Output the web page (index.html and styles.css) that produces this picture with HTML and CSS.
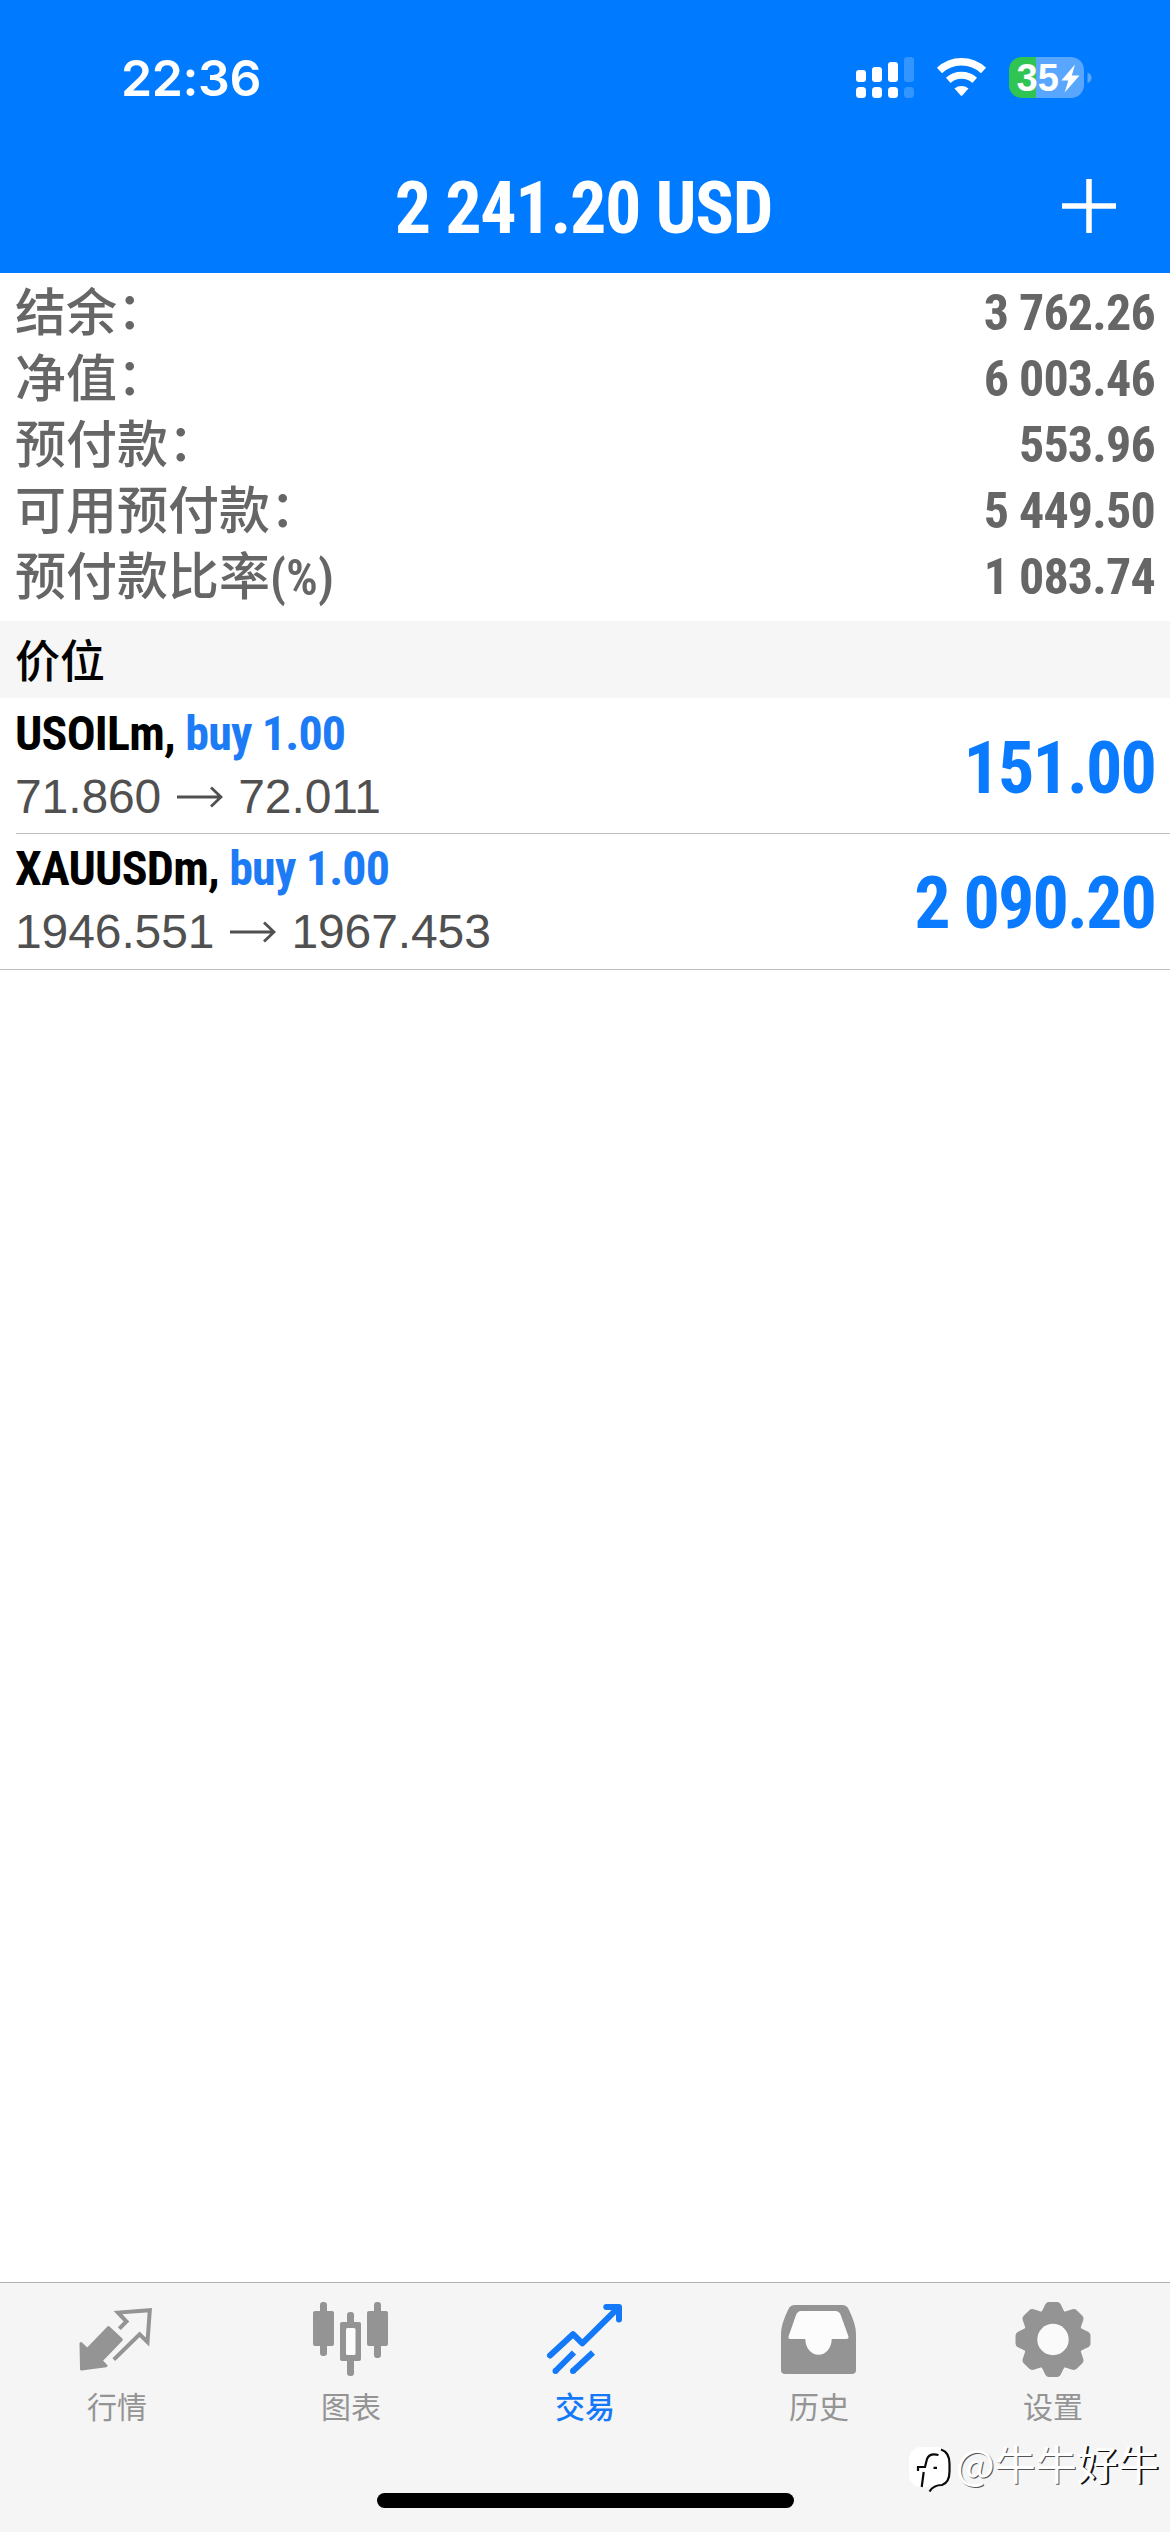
FILE: index.html
```
<!DOCTYPE html>
<html lang="zh-CN">
<head>
<meta charset="utf-8">
<title>交易</title>
<link rel="stylesheet" href="styles.css">
</head>
<body>
<div class="screen">
  <header class="header">
    <div class="status">
      <span class="clock">22:36</span>
      <svg class="status-icons" width="236" height="42" viewBox="856 57 236 42">
        <g fill="#fff">
          <rect x="856" y="70" width="10" height="12" rx="3"/>
          <rect x="872" y="67" width="10" height="15" rx="3"/>
          <rect x="888" y="62" width="10" height="20" rx="3"/>
          <rect x="856" y="87" width="10" height="11" rx="3.5"/>
          <rect x="872" y="87" width="10" height="11" rx="3.5"/>
          <rect x="888" y="87" width="10" height="11" rx="3.5"/>
        </g>
        <g fill="#3395ff">
          <rect x="904" y="57" width="10" height="25" rx="3"/>
          <rect x="904" y="87" width="10" height="11" rx="3.5"/>
        </g>
        <path d="M939.5 70.5a32 32 0 0 1 44 0" fill="none" stroke="#fff" stroke-width="7.5"/>
        <path d="M948.3 80.3a20 20 0 0 1 26.4 0" fill="none" stroke="#fff" stroke-width="7"/>
        <path d="M954.5 88.500a11.500 11.500 0 0 1 14 0L962.500 95.200q-1 1-2 0z" fill="#fff"/>
        <path d="M1036 57v41h-14a13 13 0 0 1-13-13v-15a13 13 0 0 1 13-13z" fill="#30c552"/>
        <path d="M1036 57h35a13 13 0 0 1 13 13v15a13 13 0 0 1-13 13h-35z" fill="#59a6ff"/>
        <path d="M1087.500 72.500q4 1.500 4 5.300t-4 5.300z" fill="#59a6ff"/>
        <text class="battery" x="1016.500" y="91">35</text>
        <path d="M1075 64.500L1061.300 80.500H1068.300L1064.700 92.500 1079.500 75.500H1071.800z" fill="#fff"/>
      </svg>
    </div>
    <div class="navbar">
      <span></span>
      <h1 class="title">2 241.20 USD</h1>
      <svg class="add" width="56" height="56" viewBox="0 0 56 56"><path d="M28 1v54M1 28h54" stroke="#fff" stroke-width="5.500"/></svg>
    </div>
  </header>

  <dl class="account">
    <div class="account-row"><dt>结余<span class="colon">：</span></dt><dd>3 762.26</dd></div>
    <div class="account-row"><dt>净值<span class="colon">：</span></dt><dd>6 003.46</dd></div>
    <div class="account-row"><dt>预付款<span class="colon">：</span></dt><dd>553.96</dd></div>
    <div class="account-row"><dt>可用预付款<span class="colon">：</span></dt><dd>5 449.50</dd></div>
    <div class="account-row"><dt>预付款比率<span class="unit">(%)</span></dt><dd>1 083.74</dd></div>
  </dl>

  <h2 class="section">价位</h2>

  <ul class="positions">
    <li class="position">
      <div class="deal">
        <div class="symbol">USOILm, <span class="side">buy 1.00</span></div>
        <div class="prices"><span>71.860</span><svg width="46" height="22" viewBox="0 0 46 22"><path d="M0 11h44M34 1.500l10 9.500-10 9.500" fill="none" stroke="#505050" stroke-width="2.800"/></svg><span>72.011</span></div>
      </div>
      <div class="profit">151.00</div>
    </li>
    <li class="position">
      <div class="deal">
        <div class="symbol">XAUUSDm, <span class="side">buy 1.00</span></div>
        <div class="prices"><span>1946.551</span><svg width="46" height="22" viewBox="0 0 46 22"><path d="M0 11h44M34 1.500l10 9.500-10 9.500" fill="none" stroke="#505050" stroke-width="2.800"/></svg><span>1967.453</span></div>
      </div>
      <div class="profit">2 090.20</div>
    </li>
  </ul>

  <footer class="footer">
    <nav class="tabs">
      <a class="tab">
        <svg width="80" height="80" viewBox="77 2300 80 80">
          <path d="M119.300 2328.700L126.500 2321.500 118 2312.600 149.800 2310.200 147.500 2342 139.600 2334.300 113.800 2359.600" fill="none" stroke="#949494" stroke-width="4"/>
          <path d="M81 2343.500L87.300 2349.500 108.500 2327.500 121.300 2339.700 101 2360.700 106 2365.800 81.500 2369z" fill="#949494" stroke="#949494" stroke-width="3" stroke-linejoin="round"/>
        </svg>
        <span>行情</span>
      </a>
      <a class="tab">
        <svg width="80" height="80" viewBox="311 2300 80 80" fill="#949494">
          <rect x="313" y="2311" width="21" height="35" rx="2"/>
          <rect x="320" y="2302" width="7" height="54" rx="3"/>
          <rect x="347" y="2312" width="7" height="64" rx="3"/>
          <rect x="340" y="2322" width="21" height="39" rx="2"/>
          <rect x="346" y="2328" width="9.500" height="27" rx="1.500" fill="#fcfcfc"/>
          <rect x="367" y="2311" width="21" height="35" rx="2"/>
          <rect x="374" y="2302" width="7" height="56" rx="3"/>
        </svg>
        <span>图表</span>
      </a>
      <a class="tab active">
        <svg width="80" height="80" viewBox="545 2300 80 80" fill="none" stroke="#1479f8" stroke-width="6">
          <path d="M550 2355.500L573 2334.200 582.300 2343.300 618 2308" stroke-linecap="round" stroke-linejoin="round"/>
          <path d="M606.300 2307H619V2319.500" stroke-linecap="round" stroke-linejoin="round"/>
          <path d="M574 2352.500L555.500 2371M593 2352.500L573 2371"/>
          <path d="M555.500 2371h.01M573 2371h.01" stroke-linecap="round"/>
        </svg>
        <span>交易</span>
      </a>
      <a class="tab">
        <svg width="80" height="80" viewBox="779 2300 80 80">
          <path d="M798 2305h44q4.500 0 6.500 4 7.500 15 7.500 25v36q0 4-4 4h-67q-4 0-4-4v-36q0-10 7.500-25 2-4 6.500-4z" fill="#949494"/>
          <path d="M801 2311h34.500q3.500 0 5 3.500l7.800 21.500q1 3-2 3h-14.600a13.200 15.800 0 0 1-26.400 0h-14.600q-3 0-2-3l7.500-21.500q1.500-3.500 4.800-3.500z" fill="#fcfcfc"/>
        </svg>
        <span>历史</span>
      </a>
      <a class="tab">
        <svg width="80" height="80" viewBox="-40 -39.500 80 80" fill="#949494">
          <defs><path id="tooth" d="M-12.500-26Q-10-30-8.500-33.500-7-37.500-4-37.500H4Q7-37.500 8.500-33.500 10-30 12.500-26z"/></defs>
          <circle r="29"/>
          <use href="#tooth"/><use href="#tooth" transform="rotate(45)"/><use href="#tooth" transform="rotate(90)"/><use href="#tooth" transform="rotate(135)"/>
          <use href="#tooth" transform="rotate(180)"/><use href="#tooth" transform="rotate(225)"/><use href="#tooth" transform="rotate(270)"/><use href="#tooth" transform="rotate(315)"/>
          <circle r="15.700" fill="#fafafa"/>
        </svg>
        <span>设置</span>
      </a>
    </nav>
    <div class="home-bar"></div>
    <div class="watermark">
      <svg width="44" height="50" viewBox="907 2444 44 50">
        <rect x="908" y="2447" width="40" height="40" rx="12" fill="#fff"/>
        <path d="M940 2449.500q8.500 3 8.500 14v8q0 11-7.500 13.500-8.500 0-12.500 6.500" fill="none" stroke="#0a0a0a" stroke-width="2.200"/>
        <path d="M937.500 2455q-9-2.500-11.500 4l-2 8h-7v4M922.700 2472l-2 15M932.500 2467.800h3.500" fill="none" stroke="#0a0a0a" stroke-width="2.200"/>
      </svg>
      <span class="handle">@牛牛<span class="strong">好牛</span></span>
    </div>
  </footer>
</div>
</body>
</html>
```
FILE: styles.css
```
* { box-sizing: border-box; }

body, h1, h2, dl, dd, ul {
  margin: 0;
  padding: 0;
}

body {
  background: #fff;
  font-family: "Liberation Sans", "Noto Sans CJK SC", sans-serif;
}

.screen {
  display: flex;
  flex-direction: column;
  width: 1170px;
  height: 2532px;
  overflow: hidden;
}

.header {
  height: 273px;
  background: #007aff;
  color: #fff;
}

.status {
  display: flex;
  align-items: center;
  justify-content: space-between;
  height: 146px;
  padding: 10px 78px 0 121px;
}

.clock {
  font: 600 50px/60px Inter, sans-serif;
  letter-spacing: -0.4px;
}

.battery {
  fill: #fff;
  font: 700 38px "Liberation Sans", sans-serif;
}

.navbar {
  display: grid;
  grid-template-columns: 1fr auto 1fr;
  align-items: center;
  height: 127px;
  padding: 0 53px 2px;
}

.title, .account dd, .symbol, .profit {
  font-family: Roboto, sans-serif;
  font-stretch: 75%;
  font-weight: 700;
  white-space: nowrap;
}

.title {
  padding-right: 3px;
  font-size: 72px;
  line-height: 90px;
  letter-spacing: -1.3px;
}

.add {
  justify-self: end;
  margin-bottom: 5px;
}

.account {
  height: 348px;
  padding: 6px 15px 0;
  color: #666;
}

.account-row {
  display: flex;
  justify-content: space-between;
  height: 66px;
}

.account dt {
  font: 500 51px/61px "Noto Sans CJK SC", sans-serif;
}

.colon {
  line-height: 0;
  vertical-align: 2px;
}

.unit {
  font: 600 50px/50px Roboto, sans-serif;
  font-stretch: 87%;
}

.account dd {
  font-size: 50px;
  line-height: 68px;
  letter-spacing: -0.8px;
}

.section {
  height: 77px;
  padding-left: 15px;
  background: #f6f6f6;
  color: #000;
  font: 500 45px/75px "Noto Sans CJK SC", sans-serif;
}

.positions { list-style: none; }

.position {
  display: flex;
  justify-content: space-between;
  height: 136px;
  margin-left: 16px;
  padding: 4px 15px 0 0;
  border-bottom: 1px solid #bcbcbc;
}

.position + .position {
  margin-left: 0;
  padding: 3px 15px 0 16px;
}

.deal { margin-left: -1px; }

.symbol {
  color: #000;
  font-size: 48px;
  line-height: 64px;
  letter-spacing: -0.8px;
}

.side { color: #1c7bf5; }

.prices {
  display: flex;
  align-items: center;
  gap: 15.5px;
  color: #505050;
  font-size: 48px;
  line-height: 62px;
  letter-spacing: -0.1px;
}

.profit {
  padding-top: 3px;
  color: #0a7aff;
  font-size: 72px;
  line-height: 128px;
  letter-spacing: -1.9px;
}

.footer {
  position: relative;
  display: flex;
  flex-direction: column;
  align-items: center;
  height: 250px;
  margin-top: auto;
  border-top: 1px solid #b0b0b0;
  background: #f5f5f5;
}

.tabs {
  display: grid;
  grid-template-columns: repeat(5, 1fr);
  width: 100%;
  padding-top: 17px;
}

.tab {
  display: flex;
  flex-direction: column;
  align-items: center;
  gap: 5px;
  color: #949494;
  font: 400 30px/40px "Noto Sans CJK SC", sans-serif;
}

.tab.active { color: #1479f8; font-weight: 500; }

.home-bar {
  width: 417px;
  height: 15px;
  margin: auto 0 24px;
  border-radius: 8px;
  background: #000;
}

.watermark {
  position: absolute;
  top: 161px;
  left: 908px;
  display: flex;
  align-items: flex-start;
  gap: 4px;
}

.handle {
  color: #fff;
  font: 400 41px/36px "Noto Sans CJK SC", sans-serif;
  text-shadow: 1px 1px 0 #555;
  white-space: nowrap;
}

.strong { text-shadow: 2px 1px 0 #111; }
```
